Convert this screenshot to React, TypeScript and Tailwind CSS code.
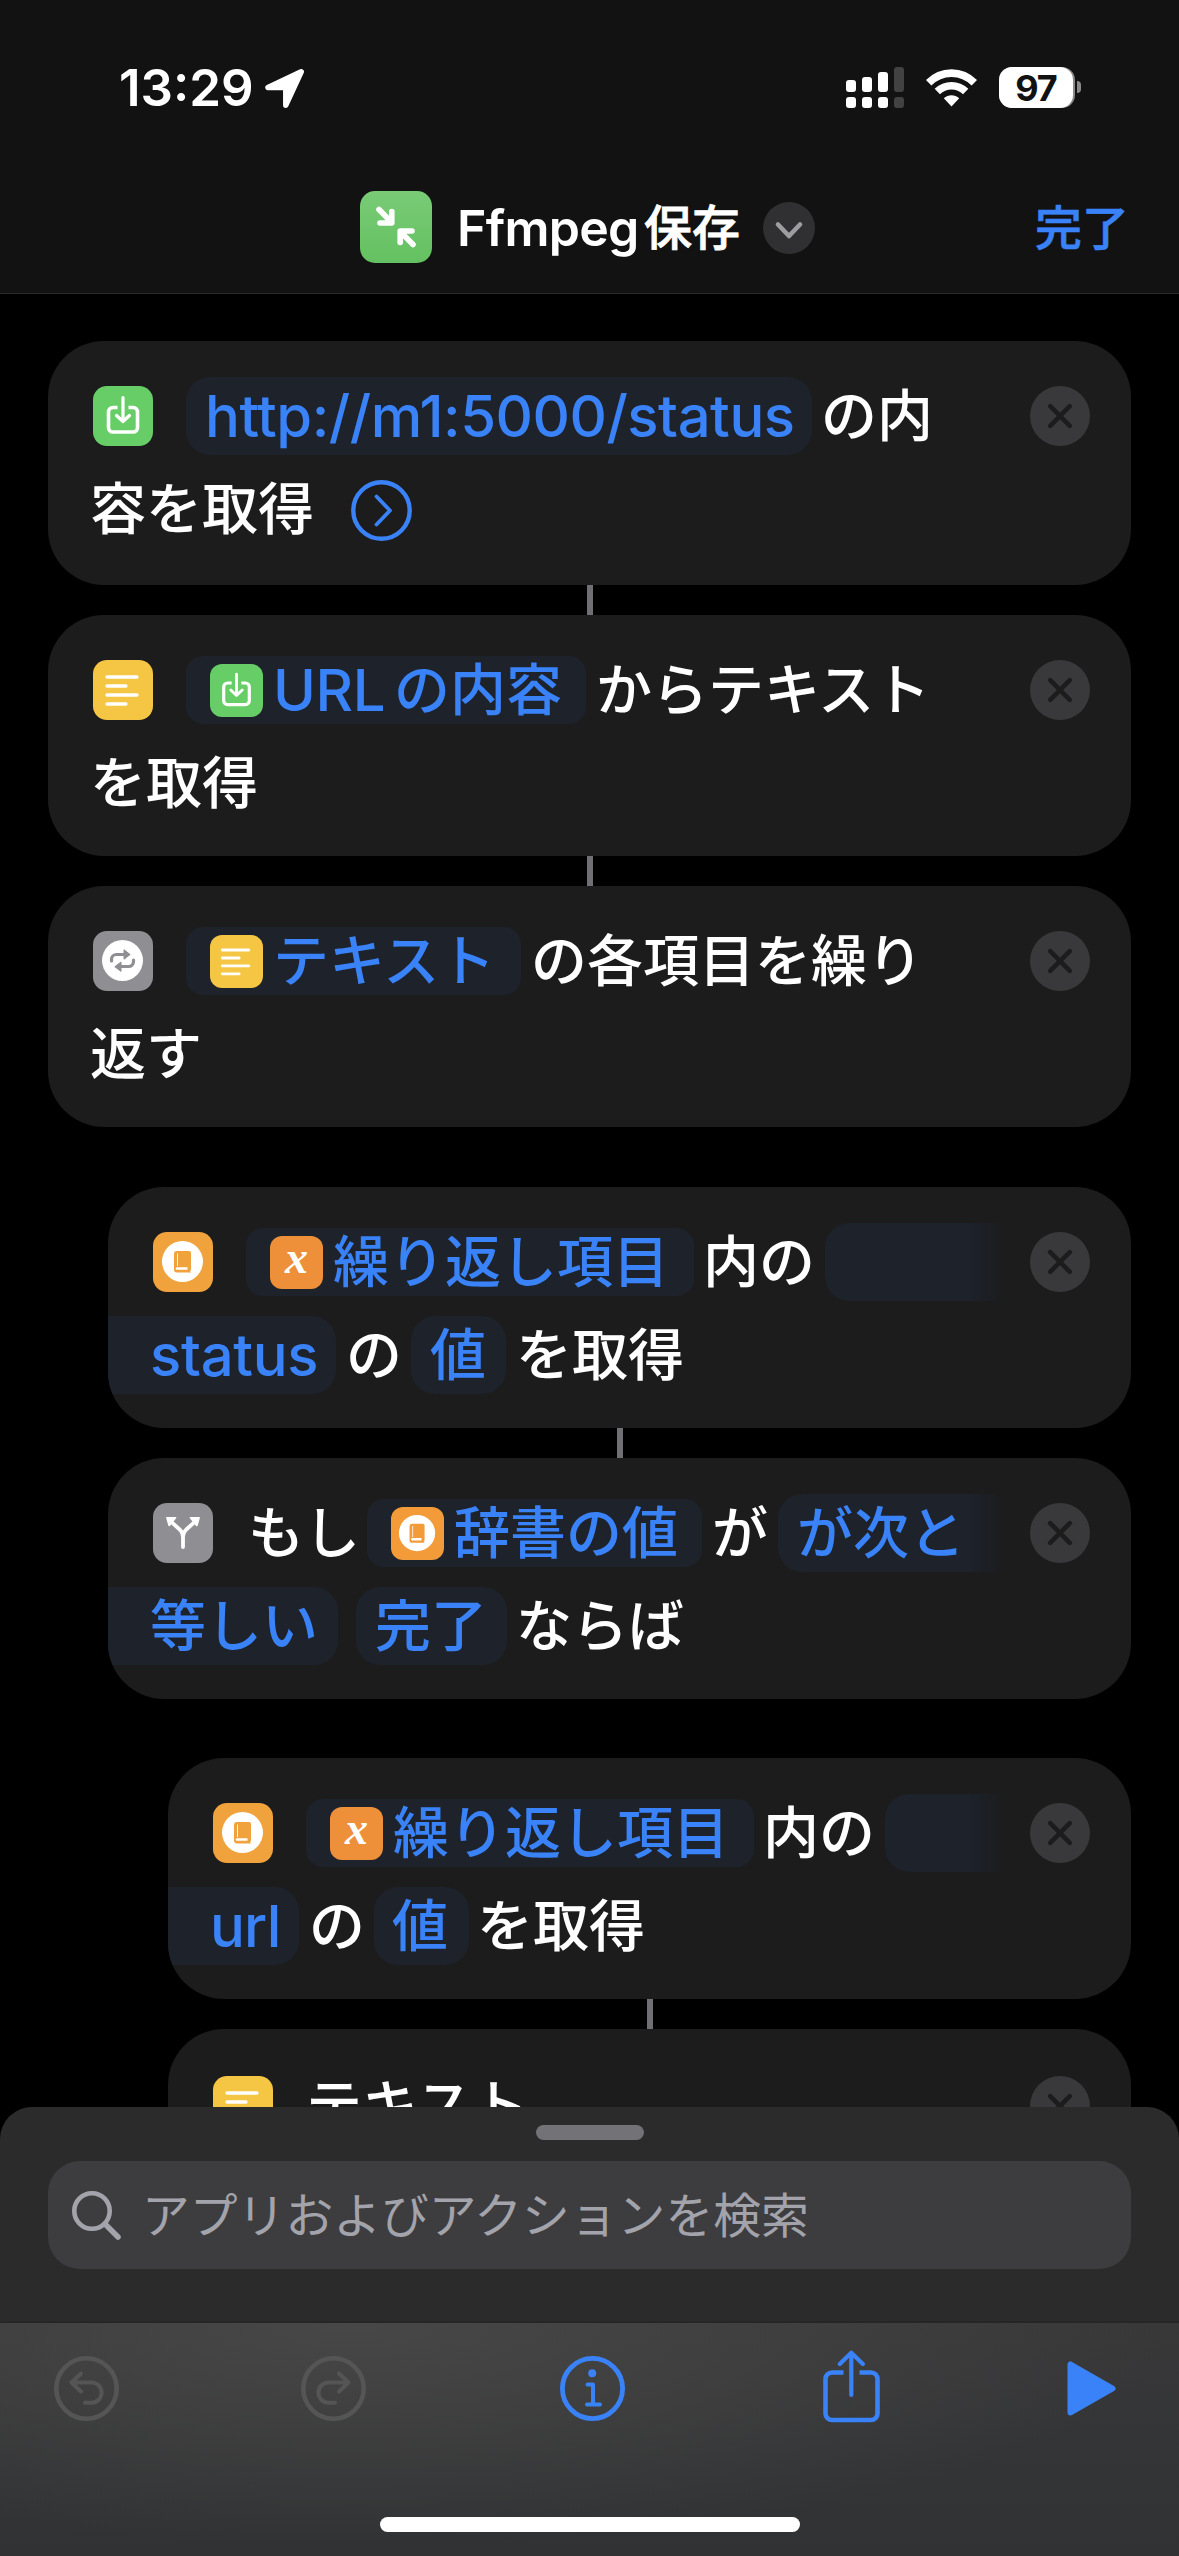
import type { ReactNode } from 'react';

const JP = "font-['Inter','Noto_Sans_CJK_JP',sans-serif]";

/* ---------- glyphs ---------- */

function DownloadGlyph() {
  return (
    <svg viewBox="0 0 60 60" className="size-full" fill="none" stroke="#fff" strokeLinecap="round" strokeLinejoin="round">
      <path d="M24.500 21.500H20a4.500 4.500 0 0 0-4.500 4.500v15.500a4.500 4.500 0 0 0 4.500 4.500h20a4.500 4.500 0 0 0 4.500-4.500V26a4.500 4.500 0 0 0-4.500-4.500h-4.500" strokeWidth="3.600" strokeLinecap="butt" />
      <path d="M30 11.500V34M23.500 29.500l6.500 6 6.500-6" strokeWidth="3.200" />
    </svg>
  );
}

function LinesGlyph() {
  return (
    <svg viewBox="0 0 60 60" className="size-full" stroke="#fff" strokeWidth="3.300" strokeLinecap="round">
      <path d="M14 17h30M14 26h19M14 35h30M14 44h19" />
    </svg>
  );
}

function RepeatGlyph() {
  return (
    <svg viewBox="0 0 60 60" className="size-full" fill="none">
      <circle cx="29.500" cy="29.500" r="20.500" fill="#fff" />
      <path d="M18.500 30v-1.500a5 5 0 0 1 5-5H31M40.500 29v1.500a5 5 0 0 1-5 5H28" stroke="#8e8e93" strokeWidth="3.200" strokeLinecap="round" />
      <path d="M31 18.800v9.400l6.200-4.700zM28 31v9.400l-6.200-4.700z" fill="#8e8e93" stroke="#8e8e93" strokeWidth="1" strokeLinejoin="round" />
    </svg>
  );
}

function BookGlyph({ tint }: { tint: string }) {
  return (
    <svg viewBox="0 0 60 60" className="size-full" fill="none">
      <circle cx="29.500" cy="29.500" r="20.500" fill="#fff" />
      <path d="M24 19h12a2 2 0 0 1 2 2v16.500a2 2 0 0 1-1 1.500l1 1.500H24a3 3 0 0 1-3-3V22a3 3 0 0 1 3-3z" fill={tint} />
      <path d="M24.500 21.500v12.500" stroke="#fff" strokeWidth="0.900" />
      <path d="M24 35.200h10.500v2.600H24a1.300 1.300 0 0 1 0-2.600z" fill="#fff" />
    </svg>
  );
}

function BranchGlyph() {
  return (
    <svg viewBox="0 0 60 60" className="size-full" fill="none">
      <path d="M30 44V34C30 27 24 25 18 18.500M30 34C30 27 36 25 42 18.500" stroke="#fff" strokeWidth="3.800" strokeLinecap="round" />
      <path d="M14 14.800h8.500l-6.300 7.600zM46 14.800h-8.500l6.300 7.600z" fill="#fff" stroke="#fff" strokeWidth="1.800" strokeLinejoin="round" />
    </svg>
  );
}

function VariableGlyph() {
  return (
    <span className="flex size-full justify-center font-['Liberation_Serif',serif] text-[46px] leading-[44px] font-bold text-white italic">
      x
    </span>
  );
}

type Kind = 'download' | 'text' | 'repeat' | 'book' | 'bookSmall' | 'branch' | 'variable';

const GLYPHS: Record<Kind, { bg: string; node: ReactNode }> = {
  download: { bg: 'bg-[#67ce67]', node: <DownloadGlyph /> },
  text: { bg: 'bg-[#f5c544]', node: <LinesGlyph /> },
  repeat: { bg: 'bg-[#8e8e93]', node: <RepeatGlyph /> },
  book: { bg: 'bg-[#f0a33c]', node: <BookGlyph tint="#f0a33c" /> },
  bookSmall: { bg: 'bg-[#f29b38]', node: <BookGlyph tint="#f29b38" /> },
  branch: { bg: 'bg-[#8e8e93]', node: <BranchGlyph /> },
  variable: { bg: 'bg-[#ed9039]', node: <VariableGlyph /> },
};

/* ---------- building blocks ---------- */

function ActionIcon({ kind }: { kind: Kind }) {
  const { bg, node } = GLYPHS[kind];
  return <span className={`ml-[45px] size-[60px] shrink-0 rounded-[14px] ${bg}`}>{node}</span>;
}

function T({ className, children }: { className: string; children: ReactNode }) {
  return <span className={`shrink-0 whitespace-nowrap ${className}`}>{children}</span>;
}

/* Variable token with its own small icon */
function Token({ kind, className, children }: { kind: Kind; className: string; children: ReactNode }) {
  const { bg, node } = GLYPHS[kind];
  return (
    <span className={`flex h-[68px] shrink-0 items-center rounded-[17px] bg-[#1d222b] pl-6 whitespace-nowrap text-[#3a82f7] ${className}`}>
      <span className={`mr-[10px] size-[53px] shrink-0 rounded-[12px] ${bg}`}>{node}</span>
      {children}
    </span>
  );
}

function Pill({ className, children }: { className: string; children?: ReactNode }) {
  return (
    <span className={`flex h-[78px] shrink-0 items-center bg-[#1d222b] whitespace-nowrap text-[#3a82f7] ${className}`}>
      {children}
    </span>
  );
}

const FADE = 'rounded-l-[24px] [mask-image:linear-gradient(to_right,#000_calc(100%-36px),transparent)]';

function CloseButton() {
  return (
    <button className="size-[60px] shrink-0 rounded-full bg-[#39393b]">
      <svg viewBox="0 0 60 60" className="size-full" stroke="#1c1c1c" strokeWidth="4.600" strokeLinecap="round">
        <path d="M20.200 20.200l19.600 19.600M39.800 20.200L20.200 39.800" />
      </svg>
    </button>
  );
}

function Card({ className, first, second }: { className: string; first: ReactNode; second?: ReactNode }) {
  return (
    <section className={`flex shrink-0 overflow-hidden rounded-[56px] bg-[#1c1c1c] ${className}`}>
      <div className="flex-1 text-[56px] leading-none font-medium text-white">
        <div className="mt-[28px] flex h-[94px] items-center">{first}</div>
        <div className="flex h-[91px] items-center">{second}</div>
      </div>
      <div className="-ml-[120px] pt-[45px] pr-[41px]">
        <CloseButton />
      </div>
    </section>
  );
}

function Connector({ className }: { className: string }) {
  return <div className={`flex shrink-0 justify-center ${className}`}><div className="w-[6px] bg-[#6f6f74]" /></div>;
}

/* ---------- page regions ---------- */

function StatusBar() {
  return (
    <div className="flex h-[177px] items-start pl-[119px] text-white">
      <span className="mt-[63px] w-[145px] text-[51px] leading-[50px] font-semibold">13:29</span>
      <svg viewBox="0 0 40 40" className="mt-[69px] ml-px size-[40px]" fill="#fff" stroke="#fff" strokeWidth="5.500" strokeLinejoin="round">
        <path d="M36.200 2.800L3 18.500h17.800V36.200z" />
      </svg>
      <svg viewBox="0 0 58 41" className="mt-[67px] ml-[541px] h-[41px] w-[58px]" fill="#fff">
        <rect x="0" y="13" width="10" height="12" rx="3" />
        <rect x="16" y="10" width="10" height="15" rx="3" />
        <rect x="32" y="5" width="10" height="20" rx="3" />
        <rect x="48" y="0" width="10" height="25" rx="3" fill="#424242" />
        <rect x="0" y="30" width="10" height="11" rx="3" />
        <rect x="16" y="30" width="10" height="11" rx="3" />
        <rect x="32" y="30" width="10" height="11" rx="3" />
        <rect x="48" y="30" width="10" height="11" rx="3" fill="#424242" />
      </svg>
      <svg viewBox="0 0 51 38" className="mt-[69px] ml-[22px] h-[38px] w-[51px]" fill="none" stroke="#fff" strokeWidth="7.600">
        <path d="M2.700 13.800C15.500 .9 35.500 .9 48.300 13.800" />
        <path d="M11.300 22.500C19.300 14.800 31.700 14.800 39.700 22.500" />
        <path d="M25.500 37.500l-7.700-8.200c4.300-4.200 11.100-4.200 15.400 0z" fill="#fff" stroke="none" />
      </svg>
      <span className="mt-[67px] ml-[22px] flex h-[41px] w-[76px] rounded-[13px] bg-[#8a8a8a]">
        <span className="flex w-[74px] items-center justify-center rounded-[13px] bg-white text-[36px] leading-none font-bold tracking-[-1px] text-[#121212]">97</span>
      </span>
      <span className="mt-[81px] ml-[2px] h-[12px] w-[4px] rounded-r-full bg-[#8a8a8a]" />
    </div>
  );
}

function TitleBar() {
  return (
    <div className="flex h-[100px] items-center pl-[360px]">
      <span className="size-[72px] shrink-0 rounded-[15px] bg-linear-to-b from-[#79cb76] to-[#64c161]">
        <svg viewBox="0 0 72 72" className="size-full" fill="none" stroke="#fff" strokeWidth="5.600" strokeLinecap="round" strokeLinejoin="round">
          <path d="M19 18.500L31.500 31.200M31.800 20.500v11.500H20M53 53.500L40.500 40.800M40.200 51.500V40H52" />
        </svg>
      </span>
      <span className="mt-px ml-[25px] w-[187px] text-[50px] leading-none font-semibold tracking-[-0.700px] text-white">Ffmpeg</span>
      <span className="mt-px w-[119px] text-[48px] leading-none font-medium text-white [-webkit-text-stroke:0.800px_#fff]">保存</span>
      <span className="mt-[2px] size-[52px] shrink-0 rounded-full bg-[#303033]">
        <svg viewBox="0 0 52 52" className="size-full" fill="none" stroke="#9c9ca1" strokeWidth="4.600" strokeLinecap="round" strokeLinejoin="round">
          <path d="M15 22.500l11 11.500 11-11.500" />
        </svg>
      </span>
      <span className="ml-[220px] text-[47px] leading-none font-medium text-[#3a82f7] [-webkit-text-stroke:0.600px_#3a82f7]">完了</span>
    </div>
  );
}

function Toolbar() {
  return (
    <footer className="flex h-[235px] flex-col border-t-2 border-[#262627] bg-[#303132] bg-[radial-gradient(ellipse_820px_220px_at_350px_0,#474747,transparent),linear-gradient(to_bottom,#383839,#303233)]">
      <div className="flex h-[131px] items-center pl-[54px]">
        <svg viewBox="0 0 65 65" className="size-[65px]" fill="none" stroke="#555556" strokeWidth="4.600" strokeLinecap="round" strokeLinejoin="round">
          <circle cx="32.500" cy="32.500" r="30.200" />
          <path d="M27 17.500L17.500 26.500 27 35.500M18.500 26.500H37.500a10 10 0 0 1 0 20.200H31" strokeWidth="4" />
        </svg>
        <svg viewBox="0 0 65 65" className="ml-[182px] size-[65px]" fill="none" stroke="#555556" strokeWidth="4.600" strokeLinecap="round" strokeLinejoin="round">
          <circle cx="32.500" cy="32.500" r="30.200" />
          <path d="M38 17.500L47.500 26.500 38 35.500M46.500 26.500H27.500a10 10 0 0 0 0 20.200H34" strokeWidth="4" />
        </svg>
        <svg viewBox="0 0 65 65" className="ml-[194px] size-[65px]" fill="none" stroke="#3a82f7" strokeWidth="4.800" strokeLinecap="round" strokeLinejoin="round">
          <circle cx="32.500" cy="32.500" r="30.100" />
          <circle cx="32.200" cy="17.300" r="4" fill="#3a82f7" stroke="none" />
          <path d="M27.500 28.500H33V48.500M27 48.500H40" strokeWidth="4" />
        </svg>
        <svg viewBox="0 0 57 73" className="mb-[5px] ml-[198px] h-[73px] w-[57px]" fill="none" stroke="#3a82f7" strokeWidth="4.600">
          <path d="M20.500 22.500H9a6.500 6.500 0 0 0-6.500 6.500v34.500a6.500 6.500 0 0 0 6.500 6.500h39a6.500 6.500 0 0 0 6.500-6.500V29a6.500 6.500 0 0 0-6.500-6.500H36.500" />
          <path d="M28.300 45V3.500M16.800 14L28.300 2.800 39.800 14" strokeLinecap="round" strokeLinejoin="round" strokeWidth="4.200" />
        </svg>
        <svg viewBox="0 0 49 55" className="ml-[187px] h-[55px] w-[49px]" fill="#3a82f7" stroke="#3a82f7" strokeWidth="6" strokeLinejoin="round">
          <path d="M3.500 3.500v48L45.500 27.500z" />
        </svg>
      </div>
      <div className="mt-[63px] ml-[380px] h-[15px] w-[420px] rounded-full bg-white" />
    </footer>
  );
}

export default function App() {
  return (
    <div className={`flex h-[2556px] w-[1179px] flex-col overflow-hidden bg-black ${JP}`} lang="ja">
      <header className="h-[294px] shrink-0 border-b border-[#2a2a2a] bg-[#121212]">
        <StatusBar />
        <TitleBar />
      </header>

      <main className="flex h-[1813px] shrink-0 flex-col overflow-hidden pt-[47px] pr-[48px]">
        <Card
          className="ml-[48px] h-[244px]"
          first={
            <>
              <ActionIcon kind="download" />
              <Pill className="ml-[33px] w-[626px] rounded-[24px] pl-[19px] text-[58px] tracking-[-0.480px]">http://m1:5000/status</Pill>
              <T className="ml-[9px]">の内</T>
            </>
          }
          second={
            <>
              <T className="ml-[42px] w-[261px]">容を取得</T>
              <svg viewBox="0 0 61 61" className="mt-[4px] size-[61px]" fill="none" stroke="#3a82f7" strokeWidth="4.400" strokeLinecap="round" strokeLinejoin="round">
                <circle cx="30.500" cy="30.500" r="28.200" />
                <path d="M25.500 16.500L39 30.500 25.500 44.500" strokeWidth="3.800" />
              </svg>
            </>
          }
        />
        <Connector className="ml-[48px] h-[30px]" />
        <Card
          className="ml-[48px] h-[241px]"
          first={
            <>
              <ActionIcon kind="text" />
              <Token kind="download" className="ml-[33px] w-[400px]">
                <T className="w-[121px] text-[58px] tracking-[-0.400px]">URL</T>
                <T className="">の内容</T>
              </Token>
              <T className="ml-[10px]">からテキスト</T>
            </>
          }
          second={<T className="ml-[42px]">を取得</T>}
        />
        <Connector className="ml-[48px] h-[30px]" />
        <Card
          className="ml-[48px] h-[241px]"
          first={
            <>
              <ActionIcon kind="repeat" />
              <Token kind="text" className="ml-[33px] w-[335px]">テキスト</Token>
              <T className="ml-[10px]">の各項目を繰り</T>
            </>
          }
          second={<T className="ml-[42px]">返す</T>}
        />

        <Card
          className="mt-[60px] ml-[108px] h-[241px]"
          first={
            <>
              <ActionIcon kind="book" />
              <Token kind="variable" className="ml-[33px] w-[448px]">繰り返し項目</Token>
              <T className="ml-[9px] w-[122px]">内の</T>
              <Pill className={`w-[181px] ${FADE}`} />
            </>
          }
          second={
            <>
              <Pill className="w-[228px] rounded-r-[24px] pl-[42px] text-[58px] tracking-[-0.300px]">status</Pill>
              <T className="ml-[10px] w-[65px]">の</T>
              <Pill className="w-[95px] rounded-[24px] pl-[19px]">値</Pill>
              <T className="ml-[10px]">を取得</T>
            </>
          }
        />
        <Connector className="ml-[108px] h-[30px]" />
        <Card
          className="ml-[108px] h-[241px]"
          first={
            <>
              <ActionIcon kind="branch" />
              <T className="ml-[35px] w-[119px]">もし</T>
              <Token kind="bookSmall" className="w-[335px]">辞書の値</Token>
              <T className="ml-[10px] w-[66px]">が</T>
              <Pill className={`w-[228px] pl-[19px] ${FADE}`}>が次と</Pill>
            </>
          }
          second={
            <>
              <Pill className="w-[230px] rounded-r-[24px] pl-[42px]">等しい</Pill>
              <Pill className="ml-[18px] w-[151px] rounded-[24px] pl-[19px]">完了</Pill>
              <T className="ml-[9px]">ならば</T>
            </>
          }
        />

        <Card
          className="mt-[59px] ml-[168px] h-[241px]"
          first={
            <>
              <ActionIcon kind="book" />
              <Token kind="variable" className="ml-[33px] w-[448px]">繰り返し項目</Token>
              <T className="ml-[9px] w-[122px]">内の</T>
              <Pill className={`w-[121px] ${FADE}`} />
            </>
          }
          second={
            <>
              <Pill className="w-[131px] rounded-r-[24px] pl-[42px] text-[58px] tracking-[-0.800px]">url</Pill>
              <T className="ml-[10px] w-[65px]">の</T>
              <Pill className="w-[95px] rounded-[24px] pl-[18px]">値</Pill>
              <T className="ml-[8px]">を取得</T>
            </>
          }
        />
        <Connector className="ml-[168px] h-[30px]" />
        <Card
          className="ml-[168px] h-[241px] pt-[2px]"
          first={
            <>
              <ActionIcon kind="text" />
              <T className="ml-[33px]">テキスト</T>
            </>
          }
        />
      </main>

      <div className="flex h-[214px] shrink-0 flex-col rounded-t-[32px] bg-[#2b2b2b] px-[48px]">
        <div className="mt-[18px] h-[15px] w-[108px] self-center rounded-full bg-[#727277]" />
        <div className="mt-[21px] flex h-[108px] items-center rounded-[32px] bg-[#3d3d3f] pl-[24px] text-[#a3a3ab]">
          <svg viewBox="0 0 49 49" className="size-[49px]" fill="none" stroke="#a3a3ab" strokeWidth="4.600" strokeLinecap="round">
            <circle cx="20" cy="20" r="17.700" />
            <path d="M33 33L46 46" strokeWidth="5.500" />
          </svg>
          <span className="mt-[4px] ml-[21px] text-[47.800px] leading-none font-normal whitespace-nowrap">アプリおよびアクションを検索</span>
        </div>
      </div>
      <Toolbar />
    </div>
  );
}
